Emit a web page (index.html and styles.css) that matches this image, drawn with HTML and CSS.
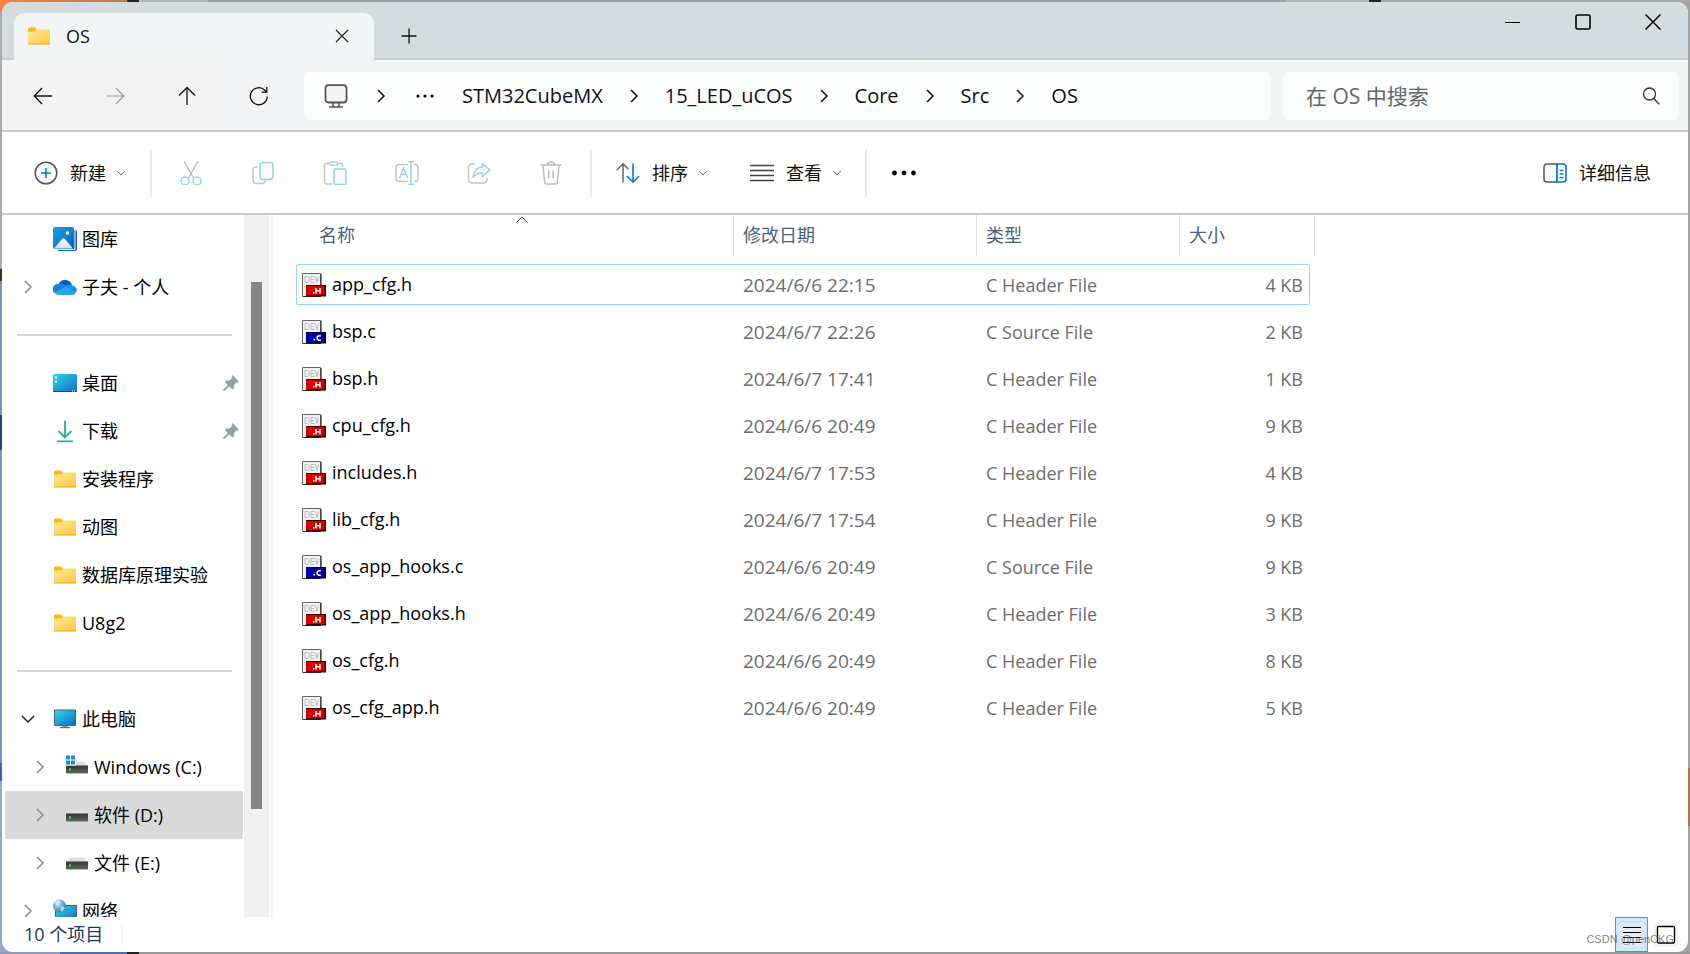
FILE: index.html
```html
<!DOCTYPE html>
<html lang="zh-CN">
<head>
<meta charset="utf-8">
<title>OS</title>
<link rel="stylesheet" href="styles.css">
</head>
<body>
<svg class="defs" width="0" height="0" aria-hidden="true">
  <defs>
    <linearGradient id="gFolder" x1="0" y1="0" x2="1" y2="1"><stop offset="0" stop-color="#ffe7a0"/><stop offset="1" stop-color="#ffc938"/></linearGradient>
    <linearGradient id="gBlue" x1="0" y1="0" x2="1" y2="1"><stop offset="0" stop-color="#35d6e6"/><stop offset="1" stop-color="#0f6cc4"/></linearGradient>
    <linearGradient id="gPic" x1="0" y1="0" x2="1" y2="1"><stop offset="0" stop-color="#1f9fe8"/><stop offset="1" stop-color="#0a63b8"/></linearGradient>
    <linearGradient id="gSnow" x1="0" y1="0" x2="0" y2="1"><stop offset="0" stop-color="#ffffff"/><stop offset="1" stop-color="#c7e4fa"/></linearGradient>
    <linearGradient id="gDrive" x1="0" y1="0" x2="0" y2="1"><stop offset="0" stop-color="#333"/><stop offset="1" stop-color="#666"/></linearGradient>
    <radialGradient id="gGlobe" cx=".4" cy=".35" r=".7"><stop offset="0" stop-color="#b9e4f7"/><stop offset="1" stop-color="#2a77ad"/></radialGradient>
    <symbol id="folder" viewBox="0 0 24 24"><path d="M1 5a1.500 1.500 0 0 1 1.500-1.500H8L9.500 5v4H1z" fill="#fbb417"/><path d="M1 7.500h7l1.500-2H23V20H1z" fill="url(#gFolder)"/><path d="M1 19.500h22v1H1z" fill="#e9a21b"/></symbol>
    <symbol id="gallery" viewBox="0 0 24 24"><rect x="4" y="3" width="20" height="21" rx="2" fill="#0b5cab"/><path d="M2 22.500h20V2" fill="none" stroke="#fff" stroke-width="1"/><rect width="21" height="22" rx="2" fill="url(#gPic)"/><path d="M1 21.500l8-9.500a2 2 0 0 1 3 0l8 9.500z" fill="url(#gSnow)"/><circle cx="14.500" cy="6" r="1.800" fill="#fff"/></symbol>
    <symbol id="cloud" viewBox="0 0 24 24"><path d="M6 8.500a7 7 0 0 1 13 2l-6 4-8-3z" fill="#0c5fb5"/><path d="M5.500 9c3-1 5 .5 7 1.800L4 19a5 5 0 0 1 1.500-10z" fill="#1583dc"/><path d="M12 11c3-2.500 6-1.500 7.500-.5a4.500 4.500 0 0 1 3.500 7L15 15z" fill="#1a90e0"/><path d="M1.500 17.500L13 11.500l10 6a4.500 4.500 0 0 1-3.500 2.500H5.500a5 5 0 0 1-4-2.500z" fill="#29a7ee"/></symbol>
    <symbol id="desktop" viewBox="0 0 24 24"><rect y="3" width="24" height="18" rx="1.500" fill="url(#gBlue)"/><path d="M2 5.500h2v2H2zM2 9.500h2v2H2z" fill="#e6fbff"/><path d="M0 20h24v1H0z" fill="#0c4a86"/><path d="M19 20h1M21 20h1" stroke="#fff"/></symbol>
    <symbol id="download" viewBox="0 0 24 24"><path d="M12 1.500v17M5.500 12l6.500 6.500 6.500-6.500M4 22.300h16" fill="none" stroke="#1db394" stroke-width="1.800"/></symbol>
    <symbol id="pc" viewBox="0 0 24 24"><rect x="1" y="2.500" width="22" height="16.500" rx="1" fill="#44617a"/><rect x="2" y="3.500" width="20" height="14.500" fill="url(#gBlue)"/><path d="M9.500 19h5v1.500h-5z" fill="#8d9ba5"/><path d="M7 20h10v1.200H7z" fill="#596873"/></symbol>
    <symbol id="drive" viewBox="0 0 24 24"><path d="M5 6.500h14l4 5H1z" fill="#dedfe3"/><rect x="1" y="10.500" width="22" height="8" fill="url(#gDrive)"/><path d="M4 13.500h2v2H4z" fill="#3be03b"/></symbol>
    <symbol id="windrive" viewBox="0 0 24 24"><path d="M5 6.500h14l4 5H1z" fill="#dedfe3"/><rect x="1" y="10.500" width="22" height="8" fill="url(#gDrive)"/><path d="M4 13.500h2v2H4z" fill="#3be03b"/><path d="M0 0h11v10.500H0z" fill="#fff"/><path d="M1 .5h4v4H1zM6 .5h4v4H6zM1 5.500h4v4H1zM6 5.500h4v4H6z" fill="#168fdd"/></symbol>
    <symbol id="network" viewBox="0 0 24 24"><rect x="2" y="6" width="22" height="17" fill="#44617a"/><rect x="3" y="7" width="20" height="14" fill="url(#gBlue)"/><circle cx="6.500" cy="7" r="6.500" fill="url(#gGlobe)"/><path d="M2 3c2-2 5-2 6 0-1 2-4 1-3 4-2 0-3-2-3-4zM8 8c2-1 3 0 4 1l-3 4c-2-1-1-3-1-5z" fill="#e0f3fb" opacity=".7"/></symbol>
    <symbol id="pin" viewBox="0 0 16 16"><path d="M9.500 0.500l6 6-1.500 1-.8-.2-2.600 2.600.2 3-1.300 1.300-3.300-3.300-4.500 4.600-1.200.3.300-1.200 4.600-4.500L2.300 7l1.300-1.200 3 .2 2.600-2.700-.2-.8z" fill="#93a0a8" stroke="#93a0a8" stroke-width=".8"/></symbol>
    <symbol id="right" viewBox="0 0 16 16"><path d="M5 2l6 6-6 6" fill="none" stroke="currentColor" stroke-width="1.500"/></symbol>
    <symbol id="down" viewBox="0 0 16 16"><path d="M2 5l6 6 6-6" fill="none" stroke="currentColor" stroke-width="1.500"/></symbol>
    <symbol id="page" viewBox="0 0 24 24"><path d="M.5.500h18v23H.5z" fill="#f1f1f1" stroke="#666"/><path d="M19 1v11M1 23.500h18" stroke="#333" stroke-width="1.200"/><path d="M3 3.500h3l1 1v4l-1 1H3zM12.500 3.500H9v6h3.500M9 6.500h3M13.500 3.500l1.500 6 1.500-6" fill="none" stroke="#bdbdbd"/></symbol>
    <symbol id="hfile" viewBox="0 0 24 24"><use href="#page"/><rect x="4" y="12" width="20" height="11.500" fill="#300"/><rect x="4" y="13" width="18.500" height="9" fill="#d90000"/><path d="M14 15v5.500M18 15v5.500M14 17.800h4" stroke="#fff" stroke-width="1.500"/><path d="M11 19h1.500v1.500H11z" fill="#fff"/></symbol>
    <symbol id="cfile" viewBox="0 0 24 24"><use href="#page"/><rect x="4" y="12" width="20" height="11.500" fill="#002"/><rect x="4" y="13" width="18.500" height="9" fill="#0000a8"/><path d="M18.800 16a2.500 2.300 0 1 0 0 4" fill="none" stroke="#fff" stroke-width="1.500"/><path d="M11.500 19H13v1.500h-1.500z" fill="#fff"/></symbol>
  </defs>
</svg>

<div class="window">
  <header class="titlebar">
    <div class="tab">
      <svg class="i24"><use href="#folder"/></svg>
      <span class="tab-title">OS</span>
      <button class="plain" aria-label="关闭标签页"><svg width="14" height="14" viewBox="0 0 14 14"><path d="M1 1l12 12M13 1L1 13" stroke="#222" stroke-width="1.200"/></svg></button>
    </div>
    <button class="plain newtab" aria-label="新标签页"><svg width="16" height="16" viewBox="0 0 16 16"><path d="M8 .5v15M.5 8h15" stroke="#111" stroke-width="1.300"/></svg></button>
    <div class="winctl">
      <button class="plain" aria-label="最小化"><svg width="16" height="16" viewBox="0 0 16 16"><path d="M0 8.500h15" stroke="#000" stroke-width="1"/></svg></button>
      <button class="plain" aria-label="最大化"><svg width="16" height="16" viewBox="0 0 16 16"><rect x="1" y="1" width="14" height="14" rx="1.500" fill="none" stroke="#000" stroke-width="1.600"/></svg></button>
      <button class="plain" aria-label="关闭"><svg width="16" height="16" viewBox="0 0 16 16"><path d="M.5.500l15 15M15.500.500l-15 15" stroke="#000" stroke-width="1.500"/></svg></button>
    </div>
  </header>

  <div class="navbar">
    <div class="navbtns">
      <button class="plain" aria-label="后退"><svg width="20" height="20" viewBox="0 0 20 20"><path d="M19 10H1.500M9 2L1.200 10 9 18" fill="none" stroke="#111" stroke-width="1.300"/></svg></button>
      <button class="plain" aria-label="前进" disabled><svg width="20" height="20" viewBox="0 0 20 20"><path d="M1 10h17.500M11 2l7.800 8L11 18" fill="none" stroke="#999" stroke-width="1.200"/></svg></button>
      <button class="plain" aria-label="上一级"><svg width="20" height="20" viewBox="0 0 20 20"><path d="M10 19V1.500M2 9.500l8-8 8 8" fill="none" stroke="#111" stroke-width="1.300"/></svg></button>
      <button class="plain" aria-label="刷新"><svg width="20" height="20" viewBox="0 0 20 20"><path d="M18.300 10.500a8.500 8.500 0 1 1-2.500-6.300l1.500 1.500M17.800 1v5.200h-5.300" fill="none" stroke="#111" stroke-width="1.300"/></svg></button>
    </div>
    <nav class="address" aria-label="地址">
      <svg class="monitor" width="24" height="24" viewBox="0 0 24 24"><rect x="1.500" y="1.200" width="21" height="17.300" rx="3" fill="#f4f5f5" stroke="#555" stroke-width="1.800"/><path d="M9 18.500v4M15 18.500v4M5 23h14" stroke="#555" stroke-width="1.600"/></svg>
      <svg class="sep"><use href="#right"/></svg>
      <button class="plain dots" aria-label="更多路径"><svg width="18" height="4" viewBox="0 0 18 4"><circle cx="2" cy="2" r="1.600"/><circle cx="9" cy="2" r="1.600"/><circle cx="16" cy="2" r="1.600"/></svg></button>
      <a href="#">STM32CubeMX</a><svg class="sep"><use href="#right"/></svg>
      <a href="#">15_LED_uCOS</a><svg class="sep"><use href="#right"/></svg>
      <a href="#">Core</a><svg class="sep"><use href="#right"/></svg>
      <a href="#">Src</a><svg class="sep"><use href="#right"/></svg>
      <a href="#">OS</a>
    </nav>
    <div class="search">
      <input type="text" placeholder="在 OS 中搜索" aria-label="在 OS 中搜索">
      <svg width="18" height="18" viewBox="0 0 18 18"><circle cx="7.500" cy="7" r="6" fill="none" stroke="#333" stroke-width="1.300"/><path d="M11.800 11.500l5.400 5.700" stroke="#333" stroke-width="1.300"/></svg>
    </div>
  </div>

  <div class="toolbar">
    <button class="cmd new"><svg class="i24" viewBox="0 0 24 24"><circle cx="12" cy="12" r="10.800" fill="#fafafa" stroke="#555" stroke-width="1.500"/><path d="M12 7v10M7 12h10" stroke="#0078d4" stroke-width="1.600"/></svg><span>新建</span><svg class="chev"><use href="#down"/></svg></button>
    <div class="vr"></div>
    <div class="icons">
      <button class="plain" aria-label="剪切" disabled><svg class="i24" viewBox="0 0 24 24"><path d="M5 0l9.500 17M19 0L9.500 17" stroke="#bbb" stroke-width="1.300"/><circle cx="6" cy="20" r="4" fill="#fff" stroke="#9bcdf2" stroke-width="1.500"/><circle cx="18" cy="20" r="4" fill="#fff" stroke="#9bcdf2" stroke-width="1.500"/></svg></button>
      <button class="plain" aria-label="复制" disabled><svg class="i24" viewBox="0 0 24 24"><path d="M6.500 6H5a3 3 0 0 0-3 3v10a3.500 3.500 0 0 0 3.500 3.500H11a3.500 3.500 0 0 0 3.500-3" fill="none" stroke="#c4c4c4" stroke-width="1.500"/><rect x="9" y="1.500" width="13" height="17" rx="3" fill="#f6faff" stroke="#9bcdf2" stroke-width="1.500"/></svg></button>
      <button class="plain" aria-label="粘贴" disabled><svg class="i24" viewBox="0 0 24 24"><path d="M7 2.500H3.500a2 2 0 0 0-2 2V21a2 2 0 0 0 2 2H9M14 2.500h3.500a2 2 0 0 1 2 2V6" fill="none" stroke="#c4c4c4" stroke-width="1.500"/><rect x="6.500" y=".8" width="8" height="3.500" rx="1.500" fill="#fff" stroke="#c4c4c4" stroke-width="1.300"/><rect x="11" y="8" width="12" height="15.500" rx="1.500" fill="#f6faff" stroke="#9bcdf2" stroke-width="1.500"/></svg></button>
      <button class="plain" aria-label="重命名" disabled><svg class="i24" viewBox="0 0 24 24"><path d="M13 3.500H4a3 3 0 0 0-3 3v11a3 3 0 0 0 3 3h9M19 3.500h1a3 3 0 0 1 3 3v11a3 3 0 0 1-3 3h-1" fill="none" stroke="#c4c4c4" stroke-width="1.500"/><path d="M4.500 17L8.500 7l4 10M6 13.500h5M13 .8h6M13 23.500h6M16 .8v22.700" fill="none" stroke="#9bcdf2" stroke-width="1.500"/></svg></button>
      <button class="plain" aria-label="共享" disabled><svg class="i24" viewBox="0 0 24 24"><path d="M8 3H5a3.500 3.500 0 0 0-3.500 3.500v12A3.500 3.500 0 0 0 5 22h11.500a3.500 3.500 0 0 0 3.500-3.500V17" fill="none" stroke="#c4c4c4" stroke-width="1.500"/><path d="M15.500 2.500L23 9l-7.500 6.500V12c-5 0-7.500 2-9.500 4.500C6.500 11 9.500 6.500 15.500 6z" fill="#f6faff" stroke="#9bcdf2" stroke-width="1.500" stroke-linejoin="round"/></svg></button>
      <button class="plain" aria-label="删除" disabled><svg class="i24" viewBox="0 0 24 24"><path d="M1.500 4h21M8.500 4a3.500 3 0 0 1 7 0M4 4l1.600 17a2 2 0 0 0 2 2h8.800a2 2 0 0 0 2-2L20 4M9.800 9.500v8M14.200 9.500v8" fill="none" stroke="#bbb" stroke-width="1.500"/></svg></button>
    </div>
    <div class="vr"></div>
    <button class="cmd sort"><svg class="i24" viewBox="0 0 24 24"><path d="M7 21.500V3M.8 9L7 2.800 12.500 8.300" fill="none" stroke="#666" stroke-width="1.500"/><path d="M17 2.500V21M10.800 15l6.200 6.200 6.200-6.200" fill="none" stroke="#0078d4" stroke-width="1.600"/></svg><span>排序</span><svg class="chev"><use href="#down"/></svg></button>
    <button class="cmd view"><svg class="i24" viewBox="0 0 24 24"><path d="M0 4.500h24M0 9.500h24M0 14.500h24M0 19.500h24" stroke="#444" stroke-width="1.400"/></svg><span>查看</span><svg class="chev"><use href="#down"/></svg></button>
    <div class="vr"></div>
    <button class="plain more" aria-label="查看更多"><svg width="24" height="6" viewBox="0 0 24 6"><circle cx="2.500" cy="3" r="2.400"/><circle cx="12" cy="3" r="2.400"/><circle cx="21.500" cy="3" r="2.400"/></svg></button>
    <button class="cmd details"><svg class="i24" viewBox="0 0 24 24"><path d="M14 3H4a3 3 0 0 0-3 3v12a3 3 0 0 0 3 3h10z" fill="#f8f8f8" stroke="#555" stroke-width="1.500"/><path d="M14 3h6a3 3 0 0 1 3 3v12a3 3 0 0 1-3 3h-6zM16.500 9.500h4M16.500 13h4M16.500 16.500h4" fill="#fff" stroke="#0078d4" stroke-width="1.600"/></svg><span>详细信息</span></button>
  </div>

  <div class="body">
    <nav class="sidebar" aria-label="导航窗格">
      <a class="row" href="#"><span class="tw"></span><svg class="i24"><use href="#gallery"/></svg>图库</a>
      <a class="row" href="#"><svg class="tw"><use href="#right"/></svg><svg class="i24"><use href="#cloud"/></svg>子夫 - 个人</a>
      <div class="rule"></div>
      <a class="row" href="#"><span class="tw"></span><svg class="i24"><use href="#desktop"/></svg>桌面<svg class="pin"><use href="#pin"/></svg></a>
      <a class="row" href="#"><span class="tw"></span><svg class="i24"><use href="#download"/></svg>下载<svg class="pin"><use href="#pin"/></svg></a>
      <a class="row" href="#"><span class="tw"></span><svg class="i24"><use href="#folder"/></svg>安装程序</a>
      <a class="row" href="#"><span class="tw"></span><svg class="i24"><use href="#folder"/></svg>动图</a>
      <a class="row" href="#"><span class="tw"></span><svg class="i24"><use href="#folder"/></svg>数据库原理实验</a>
      <a class="row" href="#"><span class="tw"></span><svg class="i24"><use href="#folder"/></svg>U8g2</a>
      <div class="rule"></div>
      <a class="row" href="#"><svg class="tw open"><use href="#down"/></svg><svg class="i24"><use href="#pc"/></svg>此电脑</a>
      <a class="row sub" href="#"><svg class="tw"><use href="#right"/></svg><svg class="i24"><use href="#windrive"/></svg>Windows (C:)</a>
      <a class="row sub selected" href="#"><svg class="tw"><use href="#right"/></svg><svg class="i24"><use href="#drive"/></svg>软件 (D:)</a>
      <a class="row sub" href="#"><svg class="tw"><use href="#right"/></svg><svg class="i24"><use href="#drive"/></svg>文件 (E:)</a>
      <a class="row" href="#"><svg class="tw"><use href="#right"/></svg><svg class="i24"><use href="#network"/></svg>网络</a>
    </nav>
    <div class="scrollbar"><div class="thumb"></div></div>
    <main class="files">
      <table>
        <colgroup><col class="c-name"><col class="c-date"><col class="c-type"><col class="c-size"></colgroup>
        <thead><tr><th class="sorted">名称<svg class="caret" width="12" height="7" viewBox="0 0 12 7"><path d="M.5 6.500L6 1l5.500 5.500" fill="none" stroke="#444"/></svg></th><th>修改日期</th><th>类型</th><th>大小</th></tr></thead>
        <tbody>
          <tr class="focus"><td><svg class="i24"><use href="#hfile"/></svg>app_cfg.h</td><td>2024/6/6 22:15</td><td>C Header File</td><td>4 KB</td></tr>
          <tr><td><svg class="i24"><use href="#cfile"/></svg>bsp.c</td><td>2024/6/7 22:26</td><td>C Source File</td><td>2 KB</td></tr>
          <tr><td><svg class="i24"><use href="#hfile"/></svg>bsp.h</td><td>2024/6/7 17:41</td><td>C Header File</td><td>1 KB</td></tr>
          <tr><td><svg class="i24"><use href="#hfile"/></svg>cpu_cfg.h</td><td>2024/6/6 20:49</td><td>C Header File</td><td>9 KB</td></tr>
          <tr><td><svg class="i24"><use href="#hfile"/></svg>includes.h</td><td>2024/6/7 17:53</td><td>C Header File</td><td>4 KB</td></tr>
          <tr><td><svg class="i24"><use href="#hfile"/></svg>lib_cfg.h</td><td>2024/6/7 17:54</td><td>C Header File</td><td>9 KB</td></tr>
          <tr><td><svg class="i24"><use href="#cfile"/></svg>os_app_hooks.c</td><td>2024/6/6 20:49</td><td>C Source File</td><td>9 KB</td></tr>
          <tr><td><svg class="i24"><use href="#hfile"/></svg>os_app_hooks.h</td><td>2024/6/6 20:49</td><td>C Header File</td><td>3 KB</td></tr>
          <tr><td><svg class="i24"><use href="#hfile"/></svg>os_cfg.h</td><td>2024/6/6 20:49</td><td>C Header File</td><td>8 KB</td></tr>
          <tr><td><svg class="i24"><use href="#hfile"/></svg>os_cfg_app.h</td><td>2024/6/6 20:49</td><td>C Header File</td><td>5 KB</td></tr>
        </tbody>
      </table>
    </main>
  </div>

  <footer class="status">
    <span class="count">10 个项目</span>
    <div class="modes">
      <button class="plain mode on" aria-label="详细信息视图"><svg class="i24" viewBox="0 0 24 24"><rect width="24" height="24" rx="3" fill="#e3ebf4"/><path d="M3 4.500h18M3 9.500h18M3 14.500h18M3 19.500h18" stroke="#000" stroke-width="1.200"/></svg></button>
      <button class="plain mode" aria-label="大图标视图"><svg class="i24" viewBox="0 0 24 24"><rect width="24" height="24" rx="3" fill="#f3f3f3"/><rect x="3.500" y="3.500" width="17" height="16.500" rx="1" fill="#fff" stroke="#000" stroke-width="1.300"/></svg></button>
    </div>
    <span class="mark">CSDN @penCKG</span>
  </footer>
</div>
</body>
</html>
```

FILE: styles.css
```css
* { box-sizing: border-box; }
html, body { height: 100%; margin: 0; }
body {
  padding: 2px;
  overflow: hidden;
  font: 18px/24px "Open Sans", "Noto Sans CJK SC", sans-serif;
  color: #111;
  background:
    linear-gradient(90deg, #f28340 0 10px, #c07850 127px, #222 127px 139px, #b5b5b5 139px 208px, #9aa3a5 208px 1286px, #b8b4b4 1286px 1369px, #222 1369px 1381px, #aaa6a6 1381px) top / 100% 2px no-repeat,
    linear-gradient(90deg, #8d9cc0 0 60px, #4d6cb5 60px 127px, #222 127px 139px, #9a9a9a 139px) bottom / 100% 2px no-repeat,
    linear-gradient(#f28340 0 12px, #aaa 12px 269px, #333 269px 281px, #8490b5 281px 415px, #2d4475 415px 450px, #8490b5 450px 763px, #3f63b5 763px 781px, #98a5c5 781px) left / 50% 100% no-repeat,
    linear-gradient(#a3a3a3 0 768px, #b5714c 768px 826px, #a3a3a3 826px) right / 50% 100% no-repeat;
}
.defs { position: absolute; }
.plain, .cmd { border: 0; padding: 0; background: none; font: inherit; color: inherit; display: flex; align-items: center; justify-content: center; }
a { color: inherit; text-decoration: none; }
.i24 { width: 24px; height: 24px; flex: none; }

.window { height: 100%; display: flex; flex-direction: column; background: #fff; border-radius: 11px; overflow: hidden; }

.titlebar { display: flex; height: 58px; flex: none; padding: 11px 0 0 12px; background: #d4dcdf; box-shadow: inset 0 -2px #c6cdcf; }
.tab { width: 360px; display: flex; align-items: center; padding: 0 25px 2px 13px; background: #f1f5f5; border-radius: 10px 10px 0 0; }
.tab-title { flex: 1; padding-left: 15px; }
.newtab { width: 69px; height: 46px; }
.winctl { display: flex; margin: -11px 0 0 auto; height: 40px; }
.winctl .plain { width: 70px; }

.navbar { display: flex; align-items: center; height: 72px; flex: none; padding: 2px 9px 0 5px; background: linear-gradient(90deg, #f3f3f4, #f2f4f4 55%, #f0f4f5); border-bottom: 2px solid #c7cacb; gap: 9px; }
.navbtns { display: flex; }
.navbtns .plain { width: 72px; height: 48px; }
.address { flex: 1; display: flex; align-items: center; height: 48px; padding-left: 20px; background: #fcfdfd; border-radius: 6px; font-size: 20px; }
.monitor { margin-right: 2px; }
.address .sep { width: 16px; height: 16px; margin: 0 23px; flex: none; }
.address .dots { margin: 0 28px 0 4px; }
.search { display: flex; align-items: center; width: 396px; height: 48px; margin-left: 3px; padding: 0 19px 0 23px; background: #fcfdfd; border-radius: 6px; }
.search input { flex: 1; min-width: 0; border: 0; padding: 0; background: none; outline: 0; font: inherit; font-size: 21px; }
.search input::placeholder { color: #666; opacity: 1; }

.toolbar { display: flex; align-items: center; height: 83px; flex: none; padding-right: 37px; border-bottom: 2px solid #c7c9ca; }
.cmd { gap: 12px; }
.chev { width: 10px; height: 10px; color: #555; margin-left: -2px; }
.vr { width: 2px; height: 48px; background: #ebebeb; }
.new { padding: 0 24px 0 32px; }
.icons { display: flex; padding: 0 3px; }
.icons .plain { width: 72px; height: 48px; }
.sort { padding-left: 24px; }
.view { padding: 0 23px 0 42px; }
.more { width: 74px; height: 48px; }
.details { margin-left: auto; }

.body { flex: 1; min-height: 0; display: flex; }
.sidebar { width: 242px; flex: none; overflow: hidden; padding-left: 3px; }
.row { display: flex; align-items: center; height: 48px; padding: 0 4px 0 15px; margin-right: 1px; color: #000; white-space: nowrap; }
.row .i24 { margin: 0 5px 0 17px; }
.tw { width: 16px; height: 16px; flex: none; color: #8a8a8a; }
.tw.open { color: #222; }
.pin { width: 16px; height: 16px; margin-left: auto; }
.sub { padding-left: 27px; }
.selected { background: #d9d9d9; border-radius: 2px; }
.rule { height: 2px; margin: 23px 12px; background: #d6d6d6; }
.scrollbar { width: 25px; flex: none; background: #f0f0f0; padding: 67px 7px 0; }
.thumb { width: 11px; height: 83%; background: #858585; }

.files { flex: 1; margin-left: 2px; border-left: 2px solid #f5f5f5; padding-left: 23px; }
table { width: 1019px; border-collapse: separate; border-spacing: 0; table-layout: fixed; }
.c-name { width: 438px; }
.c-date { width: 243px; }
.c-type { width: 203px; }
th { position: relative; height: 41px; padding: 0 0 2px 9px; text-align: left; font-weight: 400; color: #4c607a; border-right: 1px solid #e2e2e2; }
th:first-child { padding-left: 23px; }
.caret { position: absolute; top: 1px; left: 220px; }
thead::after { content: ""; display: block; height: 5px; }
td { height: 47px; padding: 0 0 0 9px; color: #6d6d6d; white-space: nowrap; }
td:first-child { padding-left: 6px; color: #000; }
td:first-child .i24 { vertical-align: -6px; margin-right: 6px; }
td:nth-child(2) { font-size: 19px; }
td:last-child { text-align: right; padding-right: 12px; }
.focus { position: relative; }
.focus td:first-child::after { content: ""; position: absolute; inset: 3px 5px 3px 0; border: 1px solid #99d1ff; border-radius: 2px; }

.status { position: relative; display: flex; align-items: center; justify-content: space-between; height: 35px; flex: none; padding: 0 6px 0 22px; color: #1e395b; }
.count { padding-right: 18px; border-right: 2px solid #f3f3f3; line-height: 17px; }
.modes { display: flex; gap: 1px; }
.mode { width: 33px; height: 35px; }
.mode.on { background: #cce8f6; border: 1px solid #3a9fd6; }
.mark { position: absolute; right: 14px; bottom: 5px; font: 11px/16px "Liberation Sans", sans-serif; color: rgba(90, 90, 90, .75); }
```
